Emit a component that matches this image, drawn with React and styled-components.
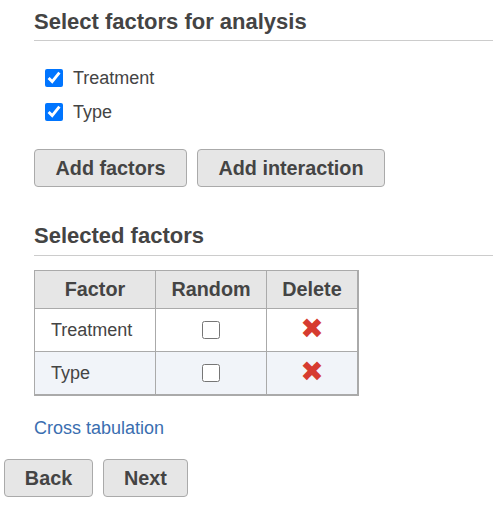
import React, { useState } from 'react'
import styled, { createGlobalStyle } from 'styled-components'

const Global = createGlobalStyle`
  body {
    margin: 0;
    background: #fff;
    font-family: "Liberation Sans", Arial, sans-serif;
    color: #444;
  }
`;

const Page = styled.div`
  width: 493px;
  height: 506px;
  overflow: hidden;
`;

const Section = styled.section`
  margin-left: 34px;
`;

const Heading = styled.h2`
  margin: 0;
  font-size: 22px;
  font-weight: bold;
  line-height: 26px;
  color: #444;
  padding-top: ${p => p.$top}px;
  padding-bottom: ${p => p.$bottom}px;
  border-bottom: 1px solid #ccc;
`;

const FactorList = styled.div`
  display: flex;
  flex-direction: column;
  gap: 14px;
  padding: 27px 0 0 11px;
`;

const CheckRow = styled.label`
  display: flex;
  align-items: center;
  gap: 10px;
  font-size: 18px;
  line-height: 20px;
  color: #444;
`;

const Box = styled.input`
  width: 18px;
  height: 18px;
  margin: 0;
  accent-color: #0075ff;
`;

const ButtonRow = styled.div`
  display: flex;
  gap: 10px;
  padding-top: ${p => p.$top}px;
  padding-left: ${p => p.$left || 0}px;
`;

const Button = styled.button`
  height: 38px;
  width: ${p => p.$w}px;
  padding: 0;
  border: 1px solid #aaa;
  border-radius: 4px;
  background: #e6e6e6;
  color: #444;
  font-family: "Liberation Sans", Arial, sans-serif;
  font-size: 19.8px;
  font-weight: bold;
`;

const Table = styled.table`
  margin-top: 14px;
  border-collapse: collapse;
  border: 2px solid #aaa;
  border-top-width: 1px;
  border-left-width: 1px;
  font-size: 18px;
  color: #444;
`;

const Th = styled.th`
  height: 37px;
  background: #e6e6e6;
  border: 1px solid #aaa;
  font-size: 19.8px;
  font-weight: bold;
  padding: 0;
  width: ${p => p.$w}px;
`;

const Tr = styled.tr`
  background: ${p => (p.$alt ? '#f1f4f9' : '#fff')};
`;

const Td = styled.td`
  height: ${p => p.$h}px;
  border: 1px solid #aaa;
  padding: 0 0 0 ${p => (p.$center ? 0 : 16)}px;
  text-align: ${p => (p.$center ? 'center' : 'left')};
  vertical-align: middle;
`;

const SmallBox = styled.input`
  width: 18px;
  height: 18px;
  margin: 4px 0 0;
`;

const Cross = styled.span`
  color: #d63b30;
  font-family: "DejaVu Sans", sans-serif;
  font-size: 28px;
  line-height: 24px;
`;

const Link = styled.a`
  display: block;
  margin-top: 22px;
  color: #3a6eb0;
  font-size: 18px;
  text-decoration: none;
`;

const factors = ['Treatment', 'Type'];

export default function App() {
  const [picked, setPicked] = useState({ Treatment: true, Type: true });

  return (
    <Page>
      <Global />
      <Section>
        <Heading $top={9} $bottom={5}>Select factors for analysis</Heading>
        <FactorList>
          {factors.map(f => (
            <CheckRow key={f}>
              <Box
                type="checkbox"
                checked={picked[f]}
                onChange={() => setPicked({ ...picked, [f]: !picked[f] })}
              />
              {f}
            </CheckRow>
          ))}
        </FactorList>
        <ButtonRow $top={27}>
          <Button $w={153}>Add factors</Button>
          <Button $w={188}>Add interaction</Button>
        </ButtonRow>
        <Heading $top={36} $bottom={6}>Selected factors</Heading>
        <Table>
          <thead>
            <tr>
              <Th $w={120}>Factor</Th>
              <Th $w={110}>Random</Th>
              <Th $w={90}>Delete</Th>
            </tr>
          </thead>
          <tbody>
            {factors.map((f, i) => (
              <Tr key={f} $alt={i % 2 === 1}>
                <Td $h={42}>{f}</Td>
                <Td $h={42} $center>
                  <SmallBox type="checkbox" />
                </Td>
                <Td $h={42} $center>
                  <Cross>✖</Cross>
                </Td>
              </Tr>
            ))}
          </tbody>
        </Table>
        <Link href="#">Cross tabulation</Link>
      </Section>
      <ButtonRow $top={20} $left={4}>
        <Button $w={89}>Back</Button>
        <Button $w={85}>Next</Button>
      </ButtonRow>
    </Page>
  );
}
